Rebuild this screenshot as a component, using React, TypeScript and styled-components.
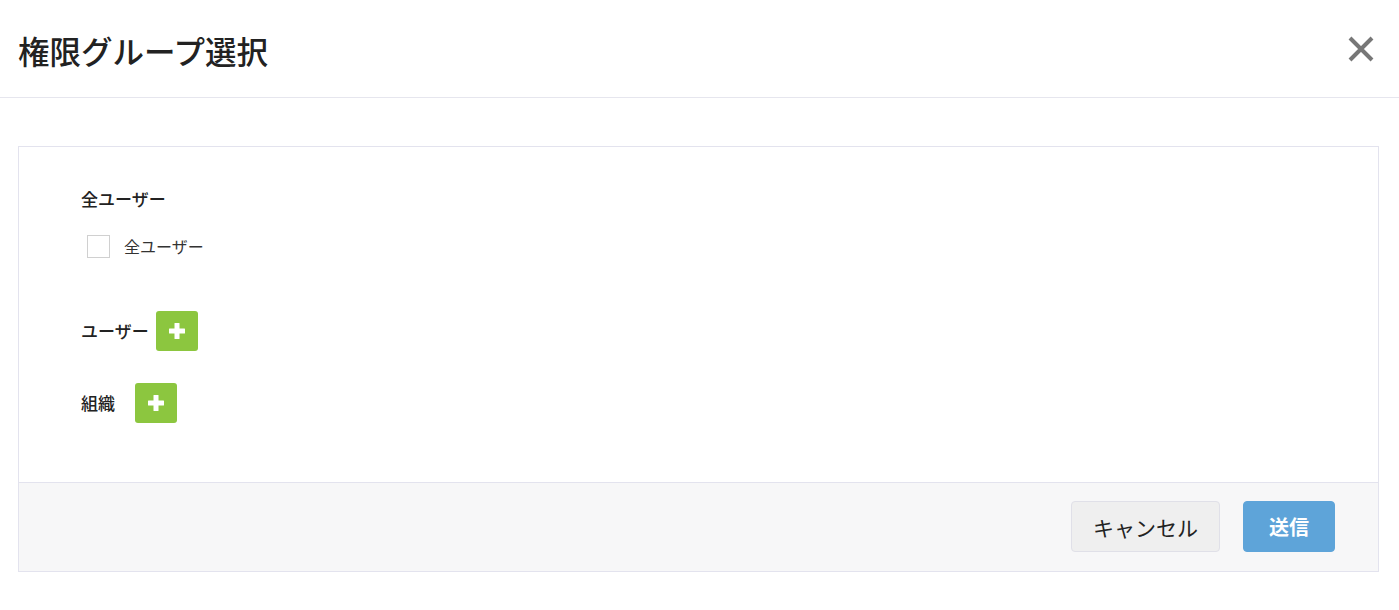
import React from "react";
import styled, { createGlobalStyle } from "styled-components";

const GlobalStyle = createGlobalStyle`
  html, body {
    margin: 0;
    padding: 0;
    background: #fff;
    font-family: "Noto Sans CJK JP", "Noto Sans", sans-serif;
    color: #222;
  }
`;

const Header = styled.div`
  height: 97px;
  border-bottom: 1px solid #e6e6ee;
  display: flex;
  align-items: center;
  padding: 0 25px 0 18px;
`;

const Title = styled.h1`
  margin: 0;
  font-size: 31.5px;
  font-weight: 500;
  line-height: 1;
  color: #222;
  flex: 1;
  position: relative;
  top: 2px;
`;

const CloseButton = styled.button`
  border: none;
  background: none;
  padding: 0;
  width: 26px;
  height: 26px;
  cursor: pointer;
  display: flex;
`;

const Panel = styled.div`
  margin: 48px 20px 0 18px;
  border: 1px solid #e3e3ee;
`;

const Body = styled.div`
  padding: 39px 62px 59px;
`;

const SectionTitle = styled.div`
  font-size: 17px;
  font-weight: 500;
  line-height: 26px;
  color: #222;
`;

const CheckRow = styled.label`
  display: flex;
  align-items: center;
  gap: 14px;
  margin: 22px 0 0 6px;
  font-size: 16px;
  color: #333;
`;

const CheckBox = styled.span`
  width: 21px;
  height: 21px;
  border: 1px solid #d0d0d0;
  background: #fff;
`;

const AddRow = styled.div<{ $top: number; $gap: number }>`
  display: flex;
  align-items: center;
  gap: ${(p) => p.$gap}px;
  margin-top: ${(p) => p.$top}px;
`;

const AddButton = styled.button`
  width: 42px;
  height: 40px;
  border: none;
  border-radius: 3px;
  background: #8cc63f;
  display: flex;
  align-items: center;
  justify-content: center;
  padding: 0;
  cursor: pointer;
`;

const Footer = styled.div`
  border-top: 1px solid #e3e3ee;
  background: #f7f7f8;
  padding: 18px 43px 19px;
  display: flex;
  justify-content: flex-end;
  gap: 23px;
`;

const Button = styled.button<{ $primary?: boolean }>`
  height: 51px;
  padding: 0 ${(p) => (p.$primary ? 25 : 21)}px;
  border-radius: 4px;
  font-family: "Noto Sans CJK JP", "Noto Sans", sans-serif;
  font-size: ${(p) => (p.$primary ? 20 : 21)}px;
  font-weight: ${(p) => (p.$primary ? 700 : 400)};
  color: ${(p) => (p.$primary ? "#fff" : "#222")};
  background: ${(p) => (p.$primary ? "#5ea4d9" : "#efefef")};
  border: 1px solid ${(p) => (p.$primary ? "#5ea4d9" : "#e0e0e8")};
  cursor: pointer;
`;

const PlusIcon = () => (
  <svg width="16" height="16" viewBox="0 0 16 16">
    <rect x="5.5" y="0" width="5" height="16" rx="0.5" fill="#fff" />
    <rect x="0" y="5.5" width="16" height="5" rx="0.5" fill="#fff" />
  </svg>
);

const CloseIcon = () => (
  <svg width="26" height="26" viewBox="0 0 26 26">
    <path d="M2 2 L24 24 M24 2 L2 24" stroke="#777" strokeWidth="4" />
  </svg>
);

export default function App() {
  return (
    <>
      <GlobalStyle />
      <Header>
        <Title>権限グループ選択</Title>
        <CloseButton aria-label="close">
          <CloseIcon />
        </CloseButton>
      </Header>
      <Panel>
        <Body>
          <SectionTitle>全ユーザー</SectionTitle>
          <CheckRow>
            <CheckBox />
            全ユーザー
          </CheckRow>
          <AddRow $top={53} $gap={7}>
            <SectionTitle>ユーザー</SectionTitle>
            <AddButton>
              <PlusIcon />
            </AddButton>
          </AddRow>
          <AddRow $top={32} $gap={20}>
            <SectionTitle>組織</SectionTitle>
            <AddButton>
              <PlusIcon />
            </AddButton>
          </AddRow>
        </Body>
        <Footer>
          <Button>キャンセル</Button>
          <Button $primary>送信</Button>
        </Footer>
      </Panel>
    </>
  );
}
